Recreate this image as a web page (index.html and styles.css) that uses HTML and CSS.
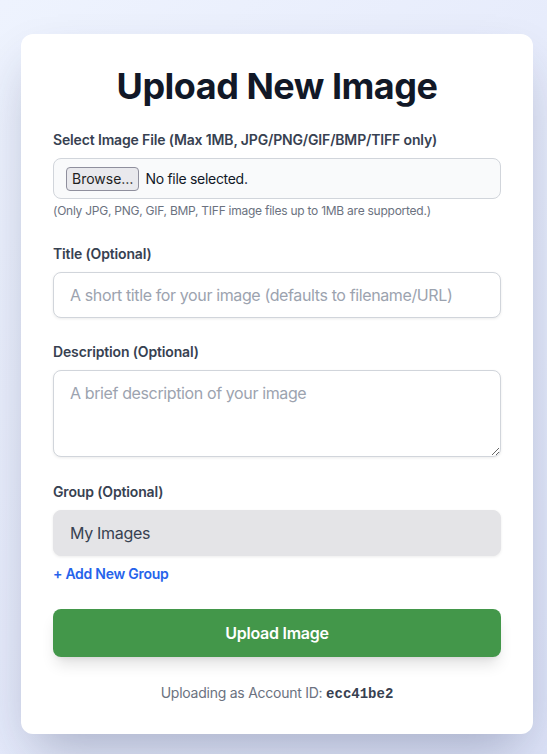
FILE: index.html
```html
<!DOCTYPE html>
<html lang="en">
<head>
<meta charset="utf-8">
<title>Upload New Image</title>
<link rel="stylesheet" href="styles.css">
</head>
<body>
<main class="page">
  <section class="card">
    <h1 class="title">Upload New Image</h1>
    <form class="form">
      <div class="field">
        <label class="label">Select Image File (Max 1MB, JPG/PNG/GIF/BMP/TIFF only)</label>
        <div class="file-box">
          <span class="browse">Browse…</span>
          <span class="file-status">No file selected.</span>
        </div>
        <p class="help">(Only JPG, PNG, GIF, BMP, TIFF image files up to 1MB are supported.)</p>
      </div>
      <div class="field field-title">
        <label class="label" for="t">Title (Optional)</label>
        <input id="t" class="input" type="text" placeholder="A short title for your image (defaults to filename/URL)">
      </div>
      <div class="field field-area">
        <label class="label" for="d">Description (Optional)</label>
        <textarea id="d" class="input textarea" placeholder="A brief description of your image"></textarea>
      </div>
      <div class="field-last">
        <label class="label" for="g">Group (Optional)</label>
        <select id="g" class="select"><option>My Images</option></select>
        <a class="add-group">+ Add New Group</a>
      </div>
      <button type="button" class="submit">Upload Image</button>
    </form>
    <p class="account">Uploading as Account ID: <span class="acc-id">ecc41be2</span></p>
  </section>
</main>
</body>
</html>
```
FILE: styles.css
```css
* { box-sizing: border-box; }
html, body { margin: 0; padding: 0; }
body {
  font-family: Inter, "Noto Sans", sans-serif;
  background: linear-gradient(135deg, #eef3fe 0%, #e6ebfb 50%, #dde3f8 100%);
  min-height: 754px;
  color: #111827;
}
.page {
  padding: 34px 0 20px 21px;
}
.card {
  width: 512px;
  height: 700px;
  background: #ffffff;
  border-radius: 12px;
  padding: 32px;
  box-shadow: 0 25px 50px -12px rgba(30, 40, 80, 0.3);
}
.title {
  margin: 0 0 24px;
  font-size: 36px;
  line-height: 40px;
  font-weight: 700;
  text-align: center;
  color: #111827;
  letter-spacing: -0.5px;
}
.form { display: flex; flex-direction: column; }
.field { display: flex; flex-direction: column; margin-bottom: 25px; }
.field-title { margin-bottom: 24px; }
.field-area { margin-bottom: 25px; }
.field-last { display: flex; flex-direction: column; }
.label {
  font-size: 14px;
  line-height: 20px;
  font-weight: 600;
  color: #374151;
  margin-bottom: 8px;
  letter-spacing: -0.15px;
}
.file-box {
  display: flex;
  align-items: center;
  height: 41px;
  border: 1px solid #d1d5db;
  border-radius: 8px;
  background: #f9fafb;
  padding: 0 12px;
}
.browse {
  display: inline-flex;
  align-items: center;
  height: 24px;
  padding: 0 5px;
  border: 1px solid #8f8f9d;
  border-radius: 4px;
  background: #e9e9ed;
  font-size: 14px;
  color: #1f1f1f;
  margin-right: 6px;
}
.file-status {
  font-size: 14px;
  color: #111827;
  letter-spacing: -0.3px;
}
.help {
  margin: 4px 0 0;
  font-size: 12px;
  line-height: 16px;
  color: #6b7280;
  letter-spacing: -0.25px;
}
.input {
  display: block;
  width: 100%;
  height: 46px;
  border: 1px solid #d1d5db;
  border-radius: 8px;
  padding: 10px 16px;
  font-family: Inter, "Noto Sans", sans-serif;
  font-size: 16px;
  line-height: 24px;
  color: #111827;
  background: #fff;
  box-shadow: 0 1px 3px rgba(0, 0, 0, 0.08);
  outline: none;
  letter-spacing: -0.38px;
}
.input::placeholder { color: #9ca3af; }
.textarea { height: 87px; resize: vertical; }
.select {
  display: block;
  width: 100%;
  height: 46px;
  appearance: none;
  -webkit-appearance: none;
  border: 1px solid #e4e4e7;
  border-radius: 8px;
  padding: 0 16px;
  background: #e4e4e7;
  font-family: Inter, "Noto Sans", sans-serif;
  font-size: 16px;
  color: #374151;
  box-shadow: 0 1px 3px rgba(0, 0, 0, 0.08);
  letter-spacing: -0.3px;
}
.add-group {
  margin-top: 8px;
  font-size: 14px;
  line-height: 20px;
  font-weight: 600;
  color: #2563eb;
  align-self: flex-start;
  letter-spacing: -0.27px;
}
.submit {
  margin-top: 25px;
  height: 48px;
  border: none;
  border-radius: 8px;
  background: #43974a;
  color: #ffffff;
  font-family: Inter, "Noto Sans", sans-serif;
  font-size: 16px;
  font-weight: 600;
  letter-spacing: -0.25px;
  box-shadow: 0 10px 15px -3px rgba(0, 0, 0, 0.12), 0 4px 6px -4px rgba(0, 0, 0, 0.1);
}
.account {
  margin: 26px 0 0;
  text-align: center;
  font-size: 14px;
  line-height: 20px;
  color: #6b7280;
  letter-spacing: -0.25px;
}
.acc-id {
  font-family: "Liberation Mono", "DejaVu Sans Mono", monospace;
  font-weight: 700;
  color: #374151;
  letter-spacing: 0;
}
```
